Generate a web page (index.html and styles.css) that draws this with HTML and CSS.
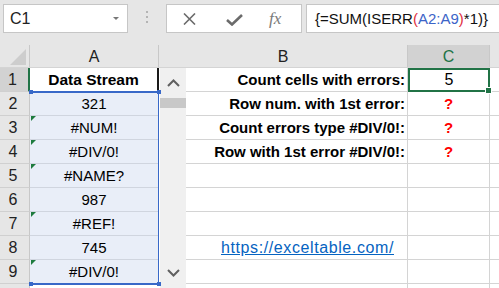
FILE: index.html
```html
<!DOCTYPE html>
<html>
  <head>
    <title>ISERR</title>
    <link rel="stylesheet" href="styles.css">
  </head>
  <body>
    <div class="toolbar">
      <div class="namebox"><span>C1</span><i class="drop"></i></div>
      <div class="grip"><i></i><i></i><i></i></div>
      <div class="fxbar">
        <svg class="ico-x" width="13" height="12" viewBox="0 0 13 12">
          <path d="M1 0.5 L12 11.5 M12 0.5 L1 11.5" stroke="#6b6b6b" stroke-width="1.6" fill="none"/>
        </svg>
        <svg class="ico-ok" width="17" height="12" viewBox="0 0 17 12">
          <path d="M1 6 L6 10.5 L16 1" stroke="#6b6b6b" stroke-width="2.6" fill="none"/>
        </svg>
        <span class="fx">fx</span>
      </div>
      <div class="formula">{=SUM(ISERR<span class="red">(</span><span class="blue">A2:A9</span><span class="red">)</span>*1)}</div>
    </div>

    <div class="colheads">
      <div class="corner">
        <svg width="30" height="22" viewBox="0 0 30 22">
          <path d="M26 4 L26 20 L10 20 Z" fill="#cdcdcd"/>
        </svg>
      </div>
      <div class="ch ch-a">A</div>
      <div class="ch ch-b">B</div>
      <div class="ch ch-c">C</div>
      <div class="ch ch-d"></div>
    </div>

    <div class="sheet">
      <div class="rowheads">
        <div class="rh active">1</div>
        <div class="rh">2</div>
        <div class="rh">3</div>
        <div class="rh">4</div>
        <div class="rh">5</div>
        <div class="rh">6</div>
        <div class="rh">7</div>
        <div class="rh">8</div>
        <div class="rh">9</div>
        <div class="rh"></div>
      </div>

      <div class="cola">
        <div class="a1">Data Stream</div>
        <div class="sel">
          <div class="cell">321</div>
          <div class="cell err">#NUM!</div>
          <div class="cell err">#DIV/0!</div>
          <div class="cell err">#NAME?</div>
          <div class="cell">987</div>
          <div class="cell err">#REF!</div>
          <div class="cell">745</div>
          <div class="cell err">#DIV/0!</div>
          <span class="hd tl"></span><span class="hd tr"></span>
          <span class="hd bl"></span><span class="hd br"></span>
        </div>
        <div class="a10"></div>
      </div>

      <div class="scroll">
        <div class="sb-btn">
          <svg width="13" height="8" viewBox="0 0 13 8"><path d="M1 7 L6.5 1.5 L12 7" stroke="#606060" stroke-width="2" fill="none"/></svg>
        </div>
        <div class="sb-thumb"></div>
        <div class="sb-track"></div>
        <div class="sb-btn">
          <svg width="13" height="8" viewBox="0 0 13 8"><path d="M1 1 L6.5 6.5 L12 1" stroke="#606060" stroke-width="2" fill="none"/></svg>
        </div>
      </div>

      <div class="cells">
        <div class="row">
          <div class="b lbl">Count cells with errors:</div>
          <div class="c c1">5<span class="fill"></span></div>
          <div class="d"></div>
        </div>
        <div class="row">
          <div class="b lbl">Row num. with 1st error:</div>
          <div class="c q">?</div>
          <div class="d"></div>
        </div>
        <div class="row">
          <div class="b lbl">Count errors type #DIV/0!:</div>
          <div class="c q">?</div>
          <div class="d"></div>
        </div>
        <div class="row">
          <div class="b lbl">Row with 1st error #DIV/0!:</div>
          <div class="c q">?</div>
          <div class="d"></div>
        </div>
        <div class="row"><div class="b"></div><div class="c"></div><div class="d"></div></div>
        <div class="row"><div class="b"></div><div class="c"></div><div class="d"></div></div>
        <div class="row"><div class="b"></div><div class="c"></div><div class="d"></div></div>
        <div class="row">
          <div class="b link"><a href="https://exceltable.com/">https://exceltable.com/</a></div>
          <div class="c"></div>
          <div class="d"></div>
        </div>
        <div class="row"><div class="b"></div><div class="c"></div><div class="d"></div></div>
        <div class="row"><div class="b"></div><div class="c"></div><div class="d"></div></div>
      </div>
    </div>
  </body>
</html>
```

FILE: styles.css
```css
body {
  margin: 0;
  width: 499px;
  height: 288px;
  overflow: hidden;
  background: #e6e6e6;
  font-family: "Liberation Sans", Arial, sans-serif;
  font-size: 15px;
  color: #000;
}

/* formula bar */
.toolbar {
  display: flex;
  height: 45px;
  padding-top: 4px;
  box-sizing: border-box;
}
.namebox {
  margin-left: 3px;
  width: 125px;
  height: 29px;
  box-sizing: border-box;
  border: 1px solid #c6c6c6;
  background: #fff;
  display: flex;
  align-items: center;
  justify-content: space-between;
  padding: 0 8px 0 6px;
  font-size: 16px;
  color: #222;
}
.drop {
  width: 0;
  height: 0;
  border-left: 3px solid transparent;
  border-right: 3px solid transparent;
  border-top: 3px solid #777;
}
.grip {
  margin-left: 18px;
  width: 2px;
  display: flex;
  flex-direction: column;
  gap: 3px;
  padding-top: 7px;
}
.grip i {
  display: block;
  width: 2px;
  height: 2px;
  background: #b4b4b4;
}
.fxbar {
  margin-left: 18px;
  width: 136px;
  height: 29px;
  box-sizing: border-box;
  border: 1px solid #c6c6c6;
  background: #fff;
  display: flex;
  align-items: center;
}
.ico-x {
  margin-left: 16px;
}
.ico-ok {
  margin-left: 30px;
  margin-top: 2px;
}
.fx {
  margin-left: 26px;
  font-family: "Liberation Serif", serif;
  font-style: italic;
  font-size: 17px;
  color: #7a7a7a;
}
.formula {
  margin-left: 4px;
  flex: 1;
  height: 29px;
  box-sizing: border-box;
  border: 1px solid #c6c6c6;
  border-right: none;
  background: #fff;
  padding-left: 8px;
  line-height: 27px;
  white-space: nowrap;
  color: #111;
}
.red {
  color: #e0303e;
}
.blue {
  color: #3c64c8;
}

/* column headers */
.colheads {
  display: flex;
  height: 23px;
  box-sizing: border-box;
  border-bottom: 1px solid #d4d4d4;
}
.corner {
  width: 30px;
  flex: none;
  box-sizing: border-box;
  border-right: 1px solid #c8c8c8;
}
.ch {
  box-sizing: border-box;
  border-right: 1px solid #c8c8c8;
  text-align: center;
  line-height: 24px;
  font-size: 16px;
  color: #222;
}
.ch-a {
  width: 129px;
}
.ch-b {
  width: 249px;
}
.ch-c {
  width: 82px;
  background: #d2d2d2;
  color: #217346;
}
.ch-d {
  flex: 1;
  border-right: none;
}

/* grid */
.sheet {
  display: flex;
  height: 220px;
  overflow: hidden;
  background: #fff;
}
.rowheads {
  width: 30px;
  flex: none;
  display: flex;
  flex-direction: column;
}
.rh {
  height: 24px;
  flex: none;
  box-sizing: border-box;
  border-bottom: 1px solid #d0d0d0;
  border-right: 1px solid #c8c8c8;
  background: #e6e6e6;
  text-align: center;
  padding-right: 3px;
  line-height: 23px;
  font-size: 16px;
  color: #222;
}
.rh.active {
  background: #d2d2d2;
  border-right: 2px solid #217346;
}

.cola {
  width: 129px;
  flex: none;
  display: flex;
  flex-direction: column;
}
.a1 {
  height: 23px;
  flex: none;
  box-sizing: border-box;
  border-right: 2px solid #1a1a1a;
  font-weight: bold;
  font-size: 15.5px;
  text-align: center;
  line-height: 23px;
}
.sel {
  position: relative;
  flex: none;
  border-top: 2px solid #3868c8;
  border-bottom: 2px solid #3868c8;
  border-right: 1px solid #3868c8;
  background: #e9eef8;
}
.sel .cell {
  position: relative;
  height: 24px;
  box-sizing: border-box;
  border-bottom: 1px solid #d0d5df;
  text-align: center;
  line-height: 23px;
}
.sel .cell:first-child {
  height: 23px;
  line-height: 22px;
}
.sel .cell:nth-child(8) {
  height: 23px;
  border-bottom: none;
}
.err::before {
  content: "";
  position: absolute;
  left: 1px;
  top: 0;
  border-top: 5px solid #1e7b3e;
  border-right: 5px solid transparent;
}
.hd {
  position: absolute;
  width: 4px;
  height: 4px;
  background: #3868c8;
}
.hd.tl {
  left: -1px;
  top: -3px;
}
.hd.tr {
  right: -3px;
  top: -3px;
}
.hd.bl {
  left: -1px;
  bottom: -3px;
}
.hd.br {
  right: -3px;
  bottom: -3px;
}
.a10 {
  height: 24px;
  flex: none;
  box-sizing: border-box;
  border-bottom: 1px solid #d4d4d4;
}

.scroll {
  width: 27px;
  flex: none;
  box-sizing: border-box;
  border-left: 1px solid #fff;
  background: #f0f0f0;
  display: flex;
  flex-direction: column;
}
.sb-btn {
  height: 30px;
  display: flex;
  align-items: center;
  justify-content: center;
}
.sb-thumb {
  height: 10px;
  background: #c8c8c8;
}
.sb-track {
  flex: 1;
}

.cells {
  flex: 1;
  display: flex;
  flex-direction: column;
}
.row {
  display: flex;
  height: 24px;
  flex: none;
}
.b, .c, .d {
  height: 24px;
  box-sizing: border-box;
  border-bottom: 1px solid #d4d4d4;
  line-height: 23px;
  white-space: nowrap;
}
.b {
  width: 222px;
  border-right: 1px solid #d4d4d4;
}
.c {
  width: 82px;
  border-right: 1px solid #d4d4d4;
  text-align: center;
}
.d {
  flex: 1;
}
.lbl {
  text-align: right;
  padding-right: 2px;
  font-weight: bold;
}
.c1 {
  position: relative;
  border: 2px solid #217346;
  line-height: 20px;
  font-size: 16px;
}
.fill {
  position: absolute;
  right: -4px;
  bottom: -4px;
  width: 5px;
  height: 5px;
  background: #217346;
  border: 1px solid #fff;
}
.q {
  color: #ff0000;
  font-weight: bold;
}
.link {
  padding-left: 35px;
}
.link a {
  font-size: 16px;
  color: #0563c1;
  letter-spacing: 0.6px;
}
```
